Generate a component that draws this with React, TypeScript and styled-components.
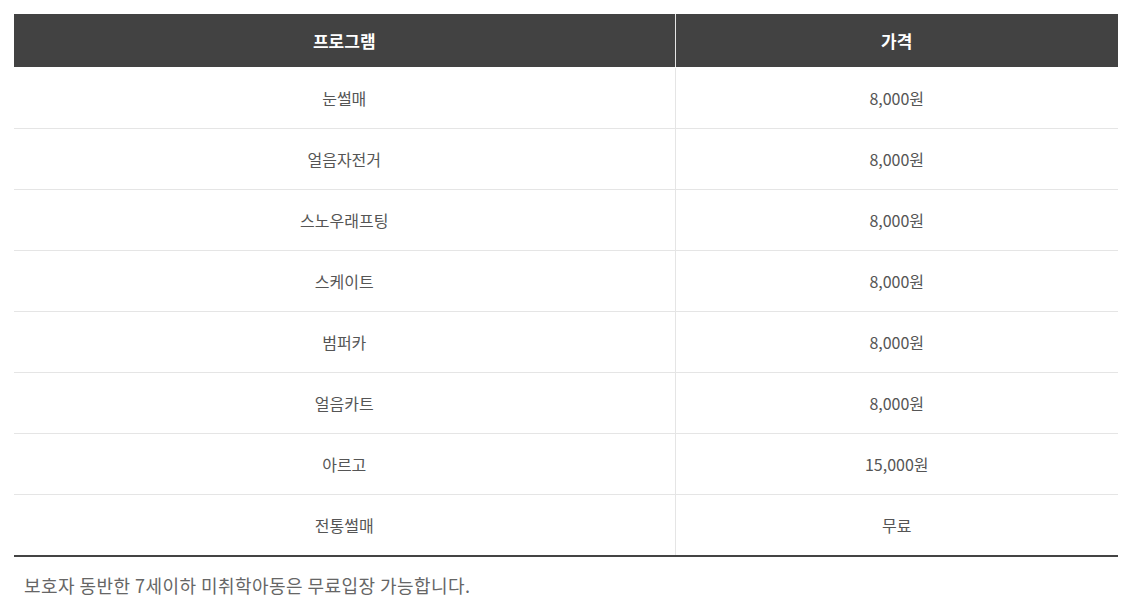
import * as React from "react";
import styled, { createGlobalStyle } from "styled-components";

const GlobalStyle = createGlobalStyle`
  body {
    margin: 0;
    background: #fff;
    font-family: "Noto Sans CJK KR", "Noto Sans", sans-serif;
  }
`;

const Page = styled.div`
  padding: 14px 11px 0 14px;
`;

const PriceTable = styled.table`
  width: 1104px;
  border-collapse: collapse;
  table-layout: fixed;
  border-bottom: 2px solid #444;
`;

const HeadCell = styled.th<{ $last?: boolean }>`
  height: 53px;
  padding: 0;
  background: #424242;
  color: #fff;
  font-size: 17px;
  font-weight: 700;
  text-align: center;
  border-bottom: 1px solid #fff;
  border-right: ${(p) => (p.$last ? "none" : "1px solid #e5e5e5")};
`;

const Cell = styled.td<{ $last?: boolean }>`
  height: 60px;
  padding: 0;
  color: #555;
  font-size: 16px;
  text-align: center;
  border-bottom: 1px solid #e5e5e5;
  border-right: ${(p) => (p.$last ? "none" : "1px solid #e5e5e5")};
`;

const Note = styled.p`
  margin: 0;
  padding: 15px 0 0 10px;
  color: #666;
  font-size: 18px;
  line-height: 27px;
  letter-spacing: 0.45px;
`;

const rows: [string, string][] = [
  ["눈썰매", "8,000원"],
  ["얼음자전거", "8,000원"],
  ["스노우래프팅", "8,000원"],
  ["스케이트", "8,000원"],
  ["범퍼카", "8,000원"],
  ["얼음카트", "8,000원"],
  ["아르고", "15,000원"],
  ["전통썰매", "무료"],
];

export default function App() {
  return (
    <Page>
      <GlobalStyle />
      <PriceTable>
        <colgroup>
          <col style={{ width: "661px" }} />
          <col />
        </colgroup>
        <thead>
          <tr>
            <HeadCell>프로그램</HeadCell>
            <HeadCell $last>가격</HeadCell>
          </tr>
        </thead>
        <tbody>
          {rows.map(([name, price]) => (
            <tr key={name}>
              <Cell>{name}</Cell>
              <Cell $last>{price}</Cell>
            </tr>
          ))}
        </tbody>
      </PriceTable>
      <Note>보호자 동반한 7세이하 미취학아동은 무료입장 가능합니다.</Note>
    </Page>
  );
}
